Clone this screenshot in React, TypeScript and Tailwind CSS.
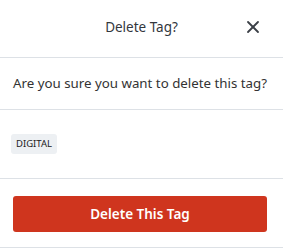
import { X } from 'lucide-react';

export default function App() {
  return (
    <div className="w-[283px] h-[249px] bg-white font-['Noto_Sans',sans-serif] text-[#333]">
      <div className="h-[58px] flex items-center justify-center relative pb-[3px] border-b border-[#dde1e6]">
        <span className="text-[13.5px] text-[#33373d]">Delete Tag?</span>
        <button className="absolute right-[20px] top-[17px] text-[#3c4047]">
          <X className="w-[20px] h-[20px]" strokeWidth={2.2} />
        </button>
      </div>
      <div className="h-[52px] flex items-center px-[13px] border-b border-[#dde1e6]">
        <p className="text-[13.3px] text-[#333] whitespace-nowrap">Are you sure you want to delete this tag?</p>
      </div>
      <div className="h-[69px] pt-[19px] px-[11px] border-b border-[#dde1e6]">
        <span className="inline-flex items-center h-[20px] px-[5px] rounded-[3px] bg-[#edf0f3] text-[9.5px] text-[#222]">
          DIGITAL
        </span>
      </div>
      <div className="h-[69px] pt-[17px] px-[13px] border-b border-[#dde1e6]">
        <button className="w-[254px] h-[36px] rounded-[3px] bg-[#cf351e] text-white text-[13.5px] font-semibold">
          Delete This Tag
        </button>
      </div>
    </div>
  );
}
